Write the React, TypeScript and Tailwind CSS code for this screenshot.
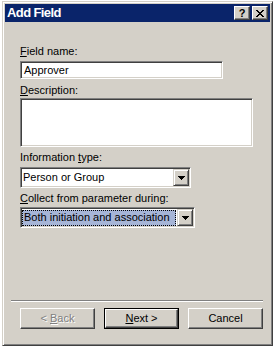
import React from 'react';

const sunken =
    'border border-t-[#808080] border-l-[#808080] border-r-white border-b-white shadow-[inset_1px_1px_0_#404040,inset_-1px_-1px_0_#d4d0c8]';
const raised =
    'border border-t-[#d4d0c8] border-l-[#d4d0c8] border-r-[#404040] border-b-[#404040] shadow-[inset_1px_1px_0_#ffffff,inset_-1px_-1px_0_#808080]';

const Key = ({ children }: { children: React.ReactNode }) => (
    <span className="underline underline-offset-[1px]">{children}</span>
);

const ComboBox = ({ value, width, selected }: { value: string; width: string; selected?: boolean }) => (
    <div className={`${sunken} ${width} h-[21px] bg-white flex items-stretch p-[1px]`}>
        <div className="flex-1 flex items-center min-w-0">
            {selected ? (
                <div className="h-[16px] flex-1 flex items-center bg-[#a6b5d7] border border-dotted border-black pl-[1px] mr-[1px]">
                    <span className="whitespace-nowrap">{value}</span>
                </div>
            ) : (
                <span className="pl-[1px] whitespace-nowrap">{value}</span>
            )}
        </div>
        {/* drop-down arrow button */}
        <div className={`${raised} w-[16px] bg-[#d4d0c8] flex items-center justify-center`}>
            <svg width="7" height="4" viewBox="0 0 7 4" shapeRendering="crispEdges">
                <path d="M0 0h7v1H0zM1 1h5v1H1zM2 2h3v1H2zM3 3h1v1H3z" fill="#000" />
            </svg>
        </div>
    </div>
);

const PushButton = ({
    children,
    isDefault,
    disabled,
}: {
    children: React.ReactNode;
    isDefault?: boolean;
    disabled?: boolean;
}) => (
    <div className={`w-[75px] h-[21px] ${isDefault ? 'border border-black' : ''}`}>
        <div className="w-full h-full bg-[#d4d0c8] border border-t-white border-l-white border-r-[#404040] border-b-[#404040] shadow-[inset_-1px_-1px_0_#808080] flex items-center justify-center">
            <span className={disabled ? 'text-[#808080] [text-shadow:1px_1px_0_#ffffff]' : 'text-black'}>{children}</span>
        </div>
    </div>
);

export default function App() {
    return (
        <div className="w-[274px] h-[347px] bg-white overflow-hidden pt-[1px] pl-[2px] font-['Liberation_Sans',Arial,sans-serif] text-[11px] leading-[13px] text-black">
            {/* dialog window */}
            <div className="w-[271px] h-[345px] bg-[#d4d0c8] border border-t-[#d4d0c8] border-l-[#d4d0c8] border-r-[#404040] border-b-[#404040] shadow-[inset_1px_1px_0_#ffffff,inset_-1px_-1px_0_#808080] p-[2px] flex flex-col">
                {/* title bar */}
                <div className="h-[18px] bg-[#0a246a] flex items-center justify-between pl-[2px] pr-[2px]">
                    <span className="text-white font-bold text-[13px] tracking-[-0.6px] leading-[14px]">Add Field</span>
                    <div className="flex gap-[2px]">
                        <div className="border border-t-white border-l-white border-r-[#404040] border-b-[#404040] shadow-[inset_-1px_-1px_0_#808080] w-[16px] h-[14px] bg-[#d4d0c8] flex items-center justify-center">
                            <span className="font-bold text-[11px] leading-[11px]">?</span>
                        </div>
                        <div className="border border-t-white border-l-white border-r-[#404040] border-b-[#404040] shadow-[inset_-1px_-1px_0_#808080] w-[16px] h-[14px] bg-[#d4d0c8] flex items-center justify-center">
                            <svg width="8" height="7" viewBox="0 0 8 7" shapeRendering="crispEdges">
                                <path d="M0 0h2v1H0zM6 0h2v1H6zM1 1h2v1H1zM5 1h2v1H5zM2 2h4v1H2zM3 3h2v1H3zM2 4h4v1H2zM1 5h2v1H1zM5 5h2v1H5zM0 6h2v1H0zM6 6h2v1H6z" fill="#000" />
                            </svg>
                        </div>
                    </div>
                </div>

                {/* form body */}
                <div className="flex flex-col pl-[15px]">
                    <div className="mt-[23px]">
                        <Key>F</Key>ield name:
                    </div>
                    <div className={`${sunken} mt-[3px] w-[203px] h-[18px] bg-white flex items-center pl-[3px]`}>Approver</div>

                    <div className="mt-[5px]">
                        <Key>D</Key>escription:
                    </div>
                    <div className={`${sunken} mt-[1px] w-[233px] h-[49px] bg-white`} />

                    <div className="mt-[4px]">
                        Information <Key>t</Key>ype:
                    </div>
                    <div className="mt-[3px]">
                        <ComboBox value="Person or Group" width="w-[171px]" />
                    </div>

                    <div className="mt-[4px]">
                        <Key>C</Key>ollect from parameter during:
                    </div>
                    <div className="mt-[2px]">
                        <ComboBox value="Both initiation and association" width="w-[175px]" selected />
                    </div>
                </div>

                <div className="flex-1" />

                {/* separator and buttons */}
                <div className="ml-[6px] mr-[7px] border-t border-t-[#808080] border-b border-b-white" />
                <div className="flex gap-[9px] pl-[15px] mt-[6px] mb-[14px]">
                    <PushButton disabled>
                        &lt; <Key>B</Key>ack
                    </PushButton>
                    <PushButton isDefault>
                        <Key>N</Key>ext &gt;
                    </PushButton>
                    <PushButton>Cancel</PushButton>
                </div>
            </div>
        </div>
    );
}
